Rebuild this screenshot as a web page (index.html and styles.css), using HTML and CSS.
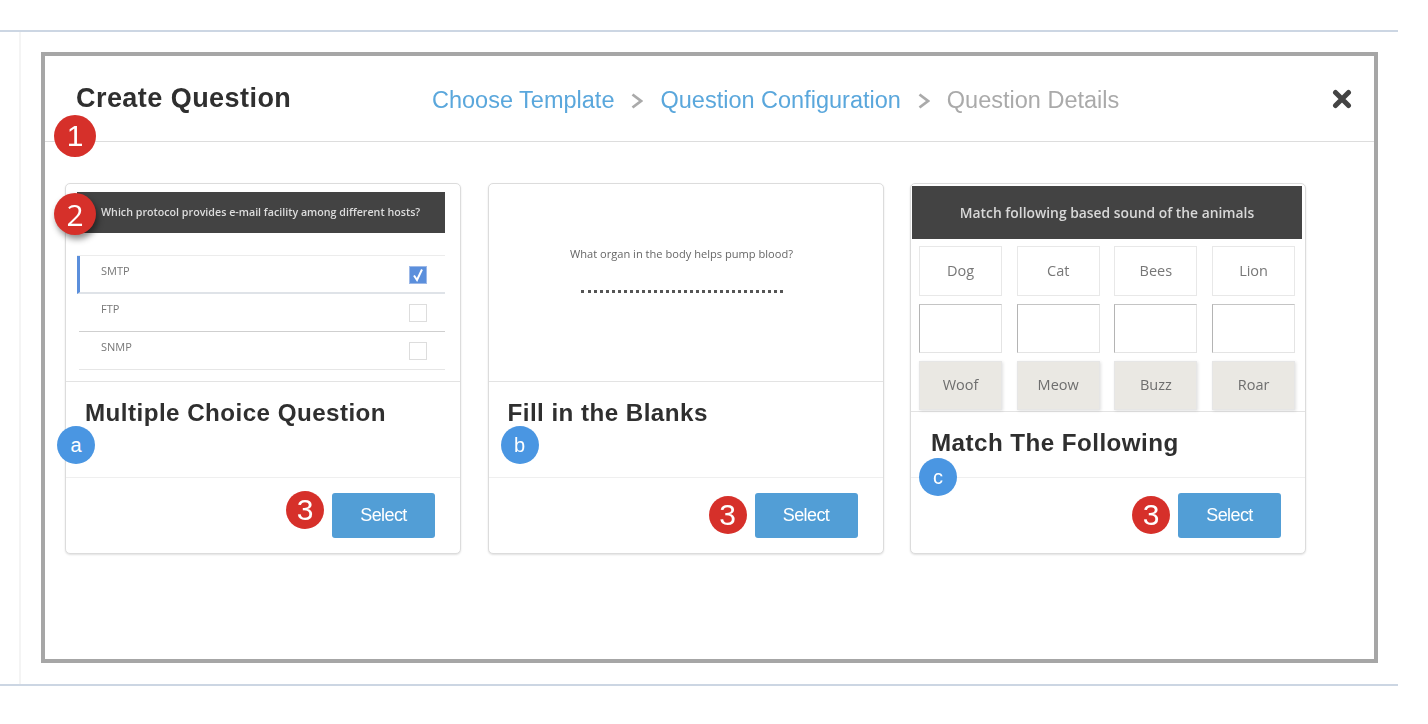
FILE: index.html
```html
<!DOCTYPE html>
<html lang="en"><head>
  <meta name="viewport" content="width=device-width, initial-scale=1.0">
  <title>Create Question</title>
  <link rel="stylesheet" href="styles.css">
</head>
<body>
  <div class="page">
    <div class="inner">
      <div class="frame">

        <!-- Header -->
        <div class="header">
          <div class="title">Create Question</div>
          <div class="crumbs">
            <span class="crumb">Choose Template</span>
            <svg class="chevron" width="12" height="16" viewBox="0 0 12 16"><path d="M1.5 1.5 L10 8 L1.5 14.5" fill="none" stroke="#aaaaaa" stroke-width="2.8"/></svg>
            <span class="crumb">Question Configuration</span>
            <svg class="chevron" width="12" height="16" viewBox="0 0 12 16"><path d="M1.5 1.5 L10 8 L1.5 14.5" fill="none" stroke="#aaaaaa" stroke-width="2.8"/></svg>
            <span class="crumb off">Question Details</span>
          </div>
          <svg class="close" width="20" height="20" viewBox="0 0 20 20"><path d="M3.5 3.5 L16.5 16.5 M16.5 3.5 L3.5 16.5" stroke="#444444" stroke-width="5" stroke-linecap="round"/></svg>
        </div>
        <div class="badge red big one">1</div>

        <!-- Templates -->
        <div class="cards">

          <div class="card">
            <div class="preview">
              <div class="q-bar">Which protocol provides e-mail facility among different hosts?</div>
              <div class="badge red big two">2</div>
              <div class="options">
                <div class="option active"><span>SMTP</span><span class="check on"><svg width="18" height="18" viewBox="0 0 18 18"><path d="M5 9.5 L8 14 L13 3.5" fill="none" stroke="#ffffff" stroke-width="2"/></svg></span></div>
                <div class="option"><span>FTP</span><span class="check"></span></div>
                <div class="option"><span>SNMP</span><span class="check"></span></div>
              </div>
            </div>
            <div class="info">
              <h3>Multiple Choice Question</h3>
              <div class="badge blue pos-a">a</div>
            </div>
            <div class="footer">
              <div class="badge red small raised">3</div>
              <button class="select">Select</button>
            </div>
          </div>

          <div class="card">
            <div class="preview">
              <div class="blank-q">What organ in the body helps pump blood?</div>
              <div class="blank-line"></div>
            </div>
            <div class="info">
              <h3>Fill in the Blanks</h3>
              <div class="badge blue pos-b">b</div>
            </div>
            <div class="footer">
              <div class="badge red small">3</div>
              <button class="select">Select</button>
            </div>
          </div>

          <div class="card">
            <div class="preview tall">
              <div class="match-bar">Match following based sound of the animals</div>
              <div class="match-grid">
                <div class="cell">Dog</div>
                <div class="cell">Cat</div>
                <div class="cell">Bees</div>
                <div class="cell">Lion</div>
                <div class="cell empty"></div>
                <div class="cell empty"></div>
                <div class="cell empty"></div>
                <div class="cell empty"></div>
                <div class="cell answer">Woof</div>
                <div class="cell answer">Meow</div>
                <div class="cell answer">Buzz</div>
                <div class="cell answer">Roar</div>
              </div>
            </div>
            <div class="info">
              <h3>Match The Following</h3>
              <div class="badge blue pos-c">c</div>
            </div>
            <div class="footer">
              <div class="badge red small">3</div>
              <button class="select">Select</button>
            </div>
          </div>

        </div>
      </div>
    </div>
  </div>
</body>
</html>
```

FILE: styles.css
```css
body {
  margin: 0;
  background: #ffffff;
  font-family: "Liberation Sans", Arial, sans-serif;
  color: #333333;
}

.page {
  width: 1398px;
  margin-top: 30px;
  border-top: 2px solid #ccd6e3;
  border-bottom: 2px solid #ccd6e3;
}
.inner {
  margin-left: 19px;
  border-left: 2px solid #f4f4f4;
  padding: 20px 0 20px 20px;
  height: 612px;
  box-sizing: content-box;
}

.frame {
  position: relative;
  width: 1329px;
  height: 603px;
  border: 4px solid #a6a6a6;
}
/* the source picture is a soft, scaled-up capture */
.header, .cards, .one {
  filter: blur(0.6px);
}

/* header */
.header {
  display: flex;
  align-items: center;
  height: 86px;
  box-sizing: border-box;
  padding: 0 22px 0 31px;
  border-bottom: 1px solid #dddddd;
}
.title {
  font-size: 27px;
  font-weight: bold;
  letter-spacing: 0.45px;
  color: #2f2f2f;
  margin-top: -1px;
  width: 215px;
  white-space: nowrap;
}
.crumbs {
  display: flex;
  align-items: center;
  margin-left: 141px;
  margin-top: 4px;
}
.crumb {
  font-size: 23.5px;
  color: #5aa7dc;
  white-space: nowrap;
}
.crumb.off {
  color: #aaaaaa;
}
.chevron {
  margin: 0 17px;
}
.close {
  margin-left: auto;
}

/* numbered markers */
.badge {
  display: flex;
  align-items: center;
  justify-content: center;
  border-radius: 50%;
  color: #ffffff;
  flex-shrink: 0;
}
.badge.red {
  background: #d6302a;
}
.badge.blue {
  background: #4a96e2;
  position: absolute;
  width: 38px;
  height: 38px;
  font-size: 20px;
}
.badge.big {
  position: absolute;
  width: 42px;
  height: 42px;
  font-size: 30px;
}
.badge.small {
  width: 38px;
  height: 38px;
  font-size: 30px;
  margin: -2px 8px 0 0;
}
.badge.raised {
  margin-top: -11px;
}
.one {
  left: 9px;
  top: 59px;
}
.two {
  left: -12px;
  top: 9px;
  box-shadow: 2px 4px 6px rgba(0, 0, 0, 0.45);
}
.pos-a {
  left: -9px;
  top: 44px;
}
.pos-b {
  left: 12px;
  top: 44px;
}
.pos-c {
  left: 8px;
  top: 46px;
}

/* cards */
.cards {
  display: flex;
  gap: 26.5px;
  padding: 41px 0 0 20px;
}
.card {
  display: flex;
  flex-direction: column;
  width: 396px;
  height: 371px;
  box-sizing: border-box;
  border: 1px solid #dcdcdc;
  border-radius: 5px;
  box-shadow: 0 1px 2px rgba(0, 0, 0, 0.12);
  background: #ffffff;
}
.preview {
  position: relative;
  height: 197px;
  flex-shrink: 0;
  border-bottom: 1px solid #e3e3e3;
  font-family: "Open Sans", sans-serif;
}
.preview.tall {
  height: 227px;
}
.info {
  position: relative;
  flex: 1;
  padding: 16px 20px 0 19px;
  border-bottom: 1px solid #efefef;
}
.card:last-child .info {
  padding-left: 20px;
}
.card:last-child .footer {
  padding-right: 24px;
}
.info h3 {
  margin: 1px 0 0;
  font-size: 24.2px;
  font-weight: bold;
  letter-spacing: 0.45px;
  color: #2f2f2f;
  white-space: nowrap;
}
.footer {
  display: flex;
  align-items: center;
  justify-content: flex-end;
  height: 75px;
  flex-shrink: 0;
  padding: 0 25px 0 0;
  box-sizing: border-box;
}
.select {
  width: 103px;
  height: 45px;
  border: none;
  border-radius: 3px;
  background: #529ed6;
  color: #ffffff;
  font-family: "Liberation Sans", Arial, sans-serif;
  font-size: 18px;
  letter-spacing: -0.6px;
}

/* card 1 preview */
.q-bar {
  margin: 8px 15px 0 11px;
  height: 41px;
  line-height: 41px;
  padding-left: 24px;
  background: #434343;
  color: #dddddd;
  font-size: 10.7px;
  font-weight: 600;
  white-space: nowrap;
}
.options {
  margin: 22px 15px 0 11px;
  border-top: 1px solid #ececec;
}
.option {
  display: flex;
  justify-content: space-between;
  padding: 7px 18px 0 22px;
  margin-left: 2px;
  height: 30px;
  font-size: 11px;
  color: #777777;
  border-bottom: 1px solid #cfcfcf;
}
.option:last-child {
  border-bottom-color: #e6e6e6;
}
.option.active {
  border-left: 3px solid #5b8fdc;
  margin-left: 0;
  padding-left: 21px;
  border-bottom: 2px solid #dfe3e8;
  height: 29px;
}
.check {
  width: 18px;
  height: 18px;
  margin-top: 3px;
  box-sizing: border-box;
  border: 1px solid #dddddd;
}
.check.on {
  background: #5b8fdc;
  border-color: #9db9e8;
}
.check svg {
  display: block;
  margin: -1px;
}

/* card 2 preview */
.blank-q {
  margin: 61px 8px 0 0;
  text-align: center;
  font-size: 11.1px;
  line-height: 17px;
  color: #666666;
}
.blank-line {
  width: 202px;
  margin: 28px 0 0 92px;
  border-top: 3px dotted #555555;
}

/* card 3 preview */
.match-bar {
  margin: 2px 3px 0 1px;
  height: 53px;
  line-height: 53px;
  text-align: center;
  background: #434343;
  color: #d8d8d8;
  font-size: 13.85px;
  font-weight: 600;
}
.match-grid {
  display: grid;
  grid-template-columns: repeat(4, 83px);
  grid-template-rows: 50px 49px 49px;
  column-gap: 14.7px;
  row-gap: 8px;
  padding: 7px 0 0 8px;
}
.cell {
  display: flex;
  align-items: center;
  justify-content: center;
  box-sizing: border-box;
  border: 1px solid #e8e8e8;
  padding-bottom: 2px;
  font-size: 14.5px;
  color: #777777;
}
.cell.empty {
  border-color: #c4c4c4 #e4e4e4 #e4e4e4 #b4b4b4;
}
.cell.answer {
  background: #eae8e3;
  border-color: #e6e6e6;
  box-shadow: 1px 1px 3px rgba(0, 0, 0, 0.12);
  color: #6e6e6e;
}
```
